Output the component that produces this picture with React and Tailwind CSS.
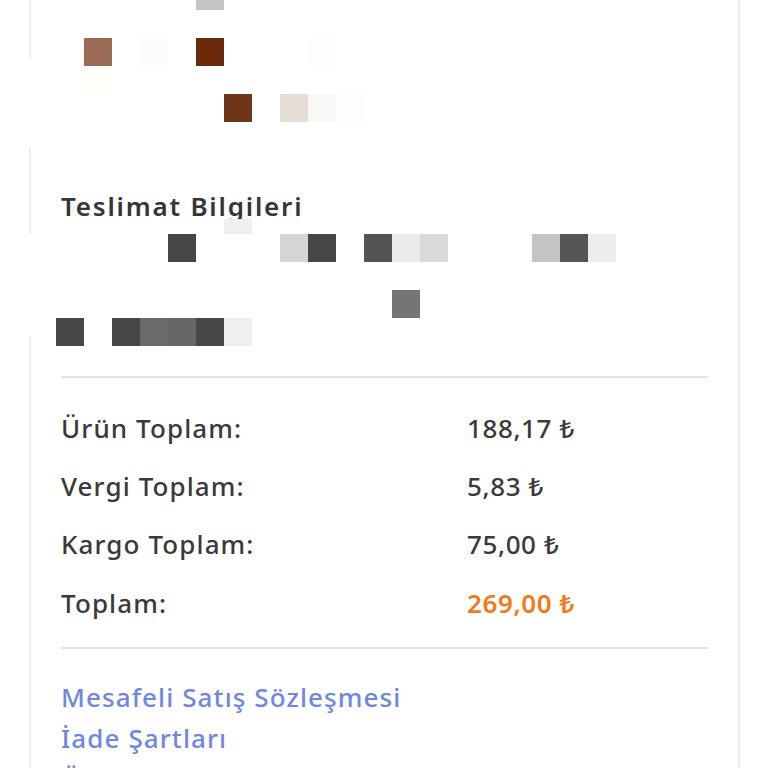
const mosaic = [
  { x: 196, y: -18, c: '#c4c4c4' },
  { x: 84, y: 38, c: '#9b6b55' },
  { x: 140, y: 38, c: '#fdfcfb' },
  { x: 196, y: 38, c: '#6b2a0a' },
  { x: 308, y: 38, c: '#fefefe' },
  { x: 84, y: 66, c: '#fffdf7' },
  { x: 224, y: 94, c: '#6e3518' },
  { x: 280, y: 94, c: '#e4ddd7' },
  { x: 308, y: 94, c: '#faf8f6' },
  { x: 336, y: 94, c: '#fdfdfd' },
  { x: 224, y: 219, c: '#f0f0f0', h: 15 },
  { x: 168, y: 234, c: '#464646' },
  { x: 280, y: 234, c: '#d6d6d6' },
  { x: 308, y: 234, c: '#474747' },
  { x: 364, y: 234, c: '#545454' },
  { x: 392, y: 234, c: '#ebebeb' },
  { x: 420, y: 234, c: '#d9d9d9' },
  { x: 532, y: 234, c: '#c4c4c4' },
  { x: 560, y: 234, c: '#565656' },
  { x: 588, y: 234, c: '#eeeeee' },
  { x: 392, y: 290, c: '#757575' },
  { x: 56, y: 318, c: '#484848' },
  { x: 112, y: 318, c: '#474747' },
  { x: 140, y: 318, c: '#6a6a6a' },
  { x: 168, y: 318, c: '#666666' },
  { x: 196, y: 318, c: '#484848' },
  { x: 224, y: 318, c: '#efefef' },
];

const totals = [
  { label: 'Ürün Toplam:', value: '188,17 ₺' },
  { label: 'Vergi Toplam:', value: '5,83 ₺' },
  { label: 'Kargo Toplam:', value: '75,00 ₺' },
  { label: 'Toplam:', value: '269,00 ₺', accent: true },
];

const links = ['Mesafeli Satış Sözleşmesi', 'İade Şartları', 'Ön Bilgilendirme Formu'];

export default function App() {
  return (
    <div className="relative h-[768px] overflow-hidden bg-white font-['Noto_Sans',sans-serif] text-[#3a3a3a]">
      <div className="ml-[29px] w-[711px] border-x-2 border-[#ececec] px-[30px]">
        <div className="h-[190px]" />
        <h2 className="text-[26px] font-semibold leading-[32px] tracking-[1.8px] text-[#353535]">Teslimat Bilgileri</h2>
        <div className="h-[154px]" />
        <div className="h-[2px] bg-[#e4e4e4]" />

        <div className="pt-[21px]">
          {totals.map((row) => (
            <div key={row.label} className="grid h-[58.3px] grid-cols-[406px_1fr] items-center text-[26px] font-medium tracking-[1.1px]">
              <span>{row.label}</span>
              <span className={row.accent ? 'font-semibold tracking-[0.6px] text-[#f07a1c]' : 'tracking-[0.6px]'}>{row.value}</span>
            </div>
          ))}
        </div>

        <div className="mt-[15px] h-[2px] bg-[#e4e4e4]" />

        <ul className="pt-[28px]">
          {links.map((l) => (
            <li key={l} className="h-[41px] text-[26px] font-medium leading-[41px] tracking-[1.1px] text-[#6f85e8]">
              {l}
            </li>
          ))}
        </ul>
      </div>

      <div className="pointer-events-none absolute inset-0">
        <div className="absolute left-[28px] top-[58px] h-[90px] w-[6px] bg-white" />
        <div className="absolute left-[28px] top-[233px] h-[103px] w-[6px] bg-white" />
        {mosaic.map((p, i) => (
          <div
            key={i}
            className="absolute w-[28px]"
            style={{ left: p.x, top: p.y, height: p.h || 28, backgroundColor: p.c }}
          />
        ))}
      </div>
    </div>
  );
}
